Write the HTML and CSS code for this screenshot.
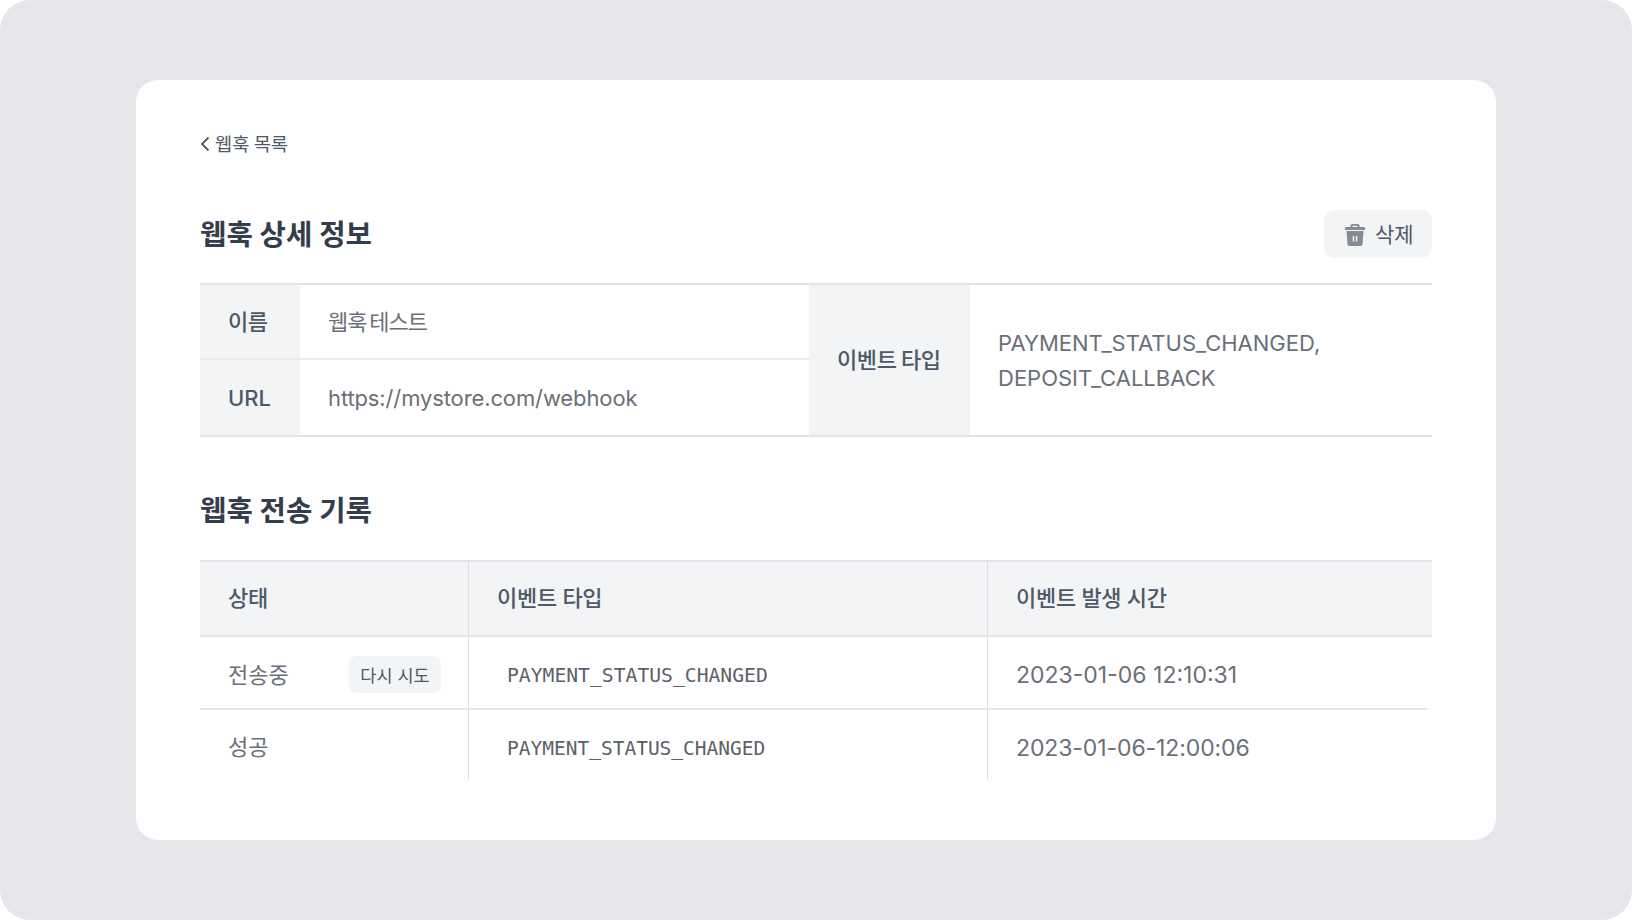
FILE: index.html
```html
<!DOCTYPE html>
<html lang="ko">
    <head>
        <meta charset="utf-8">
        <title>웹훅 상세 정보</title>
        <link rel="stylesheet" href="styles.css">
    </head>

    <body>
        <div class="frame">
            <main class="card">
                <a class="back" href="#">
                    <svg class="chevron" width="10" height="16" viewBox="0 0 10 16"><path d="M8.500 1.500 2 8l6.500 6.500" fill="none" stroke="#4e5968" stroke-width="1.800"/></svg>
                    <span>웹훅 목록</span>
                </a>

                <header class="title-row">
                    <h1>웹훅 상세 정보</h1>
                    <button class="delete">
                        <svg class="trash" width="20" height="24" viewBox="0 0 20 24"><path fill="#858c96" fill-rule="evenodd" d="M7 1h6a1.500 1.500 0 0 1 1.500 1.500V4H19a1 1 0 0 1 1 1v2H0V5a1 1 0 0 1 1-1h4.500V2.500A1.500 1.500 0 0 1 7 1Zm.500 1.800V4h5V2.800ZM1.500 8h17l-1 13.200A2 2 0 0 1 15.500 23h-11a2 2 0 0 1-2-1.800Zm6.200 5v5.500h1.500V13Zm3.100 0v5.500h1.500V13Z"/></svg>
                        <span>삭제</span>
                    </button>
                </header>

                <table class="info">
                    <tr>
                        <th class="col-name hangul">이름</th>
                        <td class="col-value hangul">웹훅 테스트</td>
                        <th class="col-event hangul" rowspan="2">이벤트 타입</th>
                        <td class="events" rowspan="2">PAYMENT_STATUS_CHANGED,<br>DEPOSIT_CALLBACK</td>
                    </tr>
                    <tr>
                        <th>URL</th>
                        <td class="url">https://mystore.com/webhook</td>
                    </tr>
                </table>

                <h2>웹훅 전송 기록</h2>

                <table class="log">
                    <tr>
                        <th class="col-status">상태</th>
                        <th class="col-type">이벤트 타입</th>
                        <th>이벤트 발생 시간</th>
                    </tr>
                    <tr>
                        <td>
                            <div class="status">
                                <span>전송중</span>
                                <button class="retry">다시 시도</button>
                            </div>
                        </td>
                        <td><code>PAYMENT_STATUS_CHANGED</code></td>
                        <td class="time">2023-01-06 12:10:31</td>
                    </tr>
                    <tr>
                        <td>성공</td>
                        <td><code class="small">PAYMENT_STATUS_CHANGED</code></td>
                        <td class="time">2023-01-06-12:00:06</td>
                    </tr>
                </table>
            </main>
        </div>
    </body>
</html>
```

FILE: styles.css
```css
html, body {
    margin: 0;
    background: #fff;
}
body {
    font-family: Inter, "Noto Sans CJK KR", sans-serif;
    color: #4e5968;
}
.frame {
    box-sizing: border-box;
    height: 920px;
    padding: 80px 136px;
    background: #e5e7ea;
    border-radius: 30px;
}
.card {
    box-sizing: border-box;
    height: 760px;
    padding: 49px 64px 0;
    background: #fff;
    border-radius: 22px;
}

.back {
    display: flex;
    align-items: center;
    gap: 5px;
    height: 28px;
    font-size: 18.7px;
    word-spacing: -1px;
    color: #4e5968;
    text-decoration: none;
}
.back span {
    padding-bottom: 2px;
}
.chevron {
    margin-top: 2px;
}

.title-row {
    display: flex;
    justify-content: space-between;
    align-items: center;
    height: 48px;
    margin-top: 53px;
}
h1, h2 {
    margin: 0;
    padding-top: 1px;
    font-size: 28.7px;
    font-weight: 700;
    line-height: 48px;
    color: #333d4b;
}
h2 {
    margin-top: 49px;
}
button {
    border: 0;
    background: #f2f4f6;
    font: inherit;
    color: #4e5968;
}
.delete {
    display: flex;
    align-items: center;
    gap: 10px;
    box-sizing: border-box;
    width: 108px;
    height: 48px;
    padding: 0 0 2px 21px;
    font-size: 21px;
    border-radius: 10px;
}
.trash {
    margin-top: 4px;
}

table {
    width: 1232px;
    border-collapse: separate;
    border-spacing: 0;
    table-layout: fixed;
    font-size: 22px;
}
th {
    background: #f2f4f6;
    font-weight: 500;
    text-align: left;
    color: #4e5968;
}
td {
    color: #6b7078;
}

.info {
    margin-top: 25px;
    border-top: 2px solid #e3e5e8;
    border-bottom: 2px solid #e3e5e8;
}
.info th, .info td {
    height: 75px;
    padding: 0 28px;
    box-sizing: border-box;
}
.info .hangul {
    padding-bottom: 4px;
    letter-spacing: -0.4px;
    word-spacing: -3px;
}
.info .col-value {
    letter-spacing: -1.1px;
    word-spacing: -2px;
}
.info .col-event {
    white-space: nowrap;
    word-spacing: -1px;
}
.info tr:first-child th:first-child, .info tr:first-child .col-value {
    border-bottom: 2px solid #e8eaec;
}
.col-name {
    width: 100px;
}
.col-value {
    width: 509px;
}
.col-event {
    width: 161px;
}
.info .events {
    padding-top: 2px;
    line-height: 35px;
}
.info .url {
    letter-spacing: -0.12px;
}

.log {
    margin-top: 25px;
}
.log th {
    height: 77px;
    box-sizing: border-box;
    border-top: 2px solid #e3e5e8;
    border-bottom: 2px solid #e3e5e8;
    padding-bottom: 6px;
    letter-spacing: -0.3px;
}
.log th, .log td {
    padding-left: 28px;
    padding-right: 28px;
    border-right: 1px solid #dcdee1;
}
.log tr > :last-child {
    border-right: 0;
}
.log td {
    box-sizing: border-box;
    height: 73px;
}
.log tr:last-child td {
    height: 70px;
}
.log tr:nth-child(2) td {
    border-bottom: 2px solid #e3e5e8;
}
.log tr:nth-child(2) td:last-child {
    border-bottom: 0;
    background: linear-gradient(#e3e5e8, #e3e5e8) no-repeat left bottom / calc(100% - 5px) 2px;
}
.col-status {
    width: 269px;
}
.col-type {
    width: 519px;
}
.status {
    display: flex;
    justify-content: space-between;
    align-items: center;
}
.retry {
    width: 92px;
    height: 37px;
    margin: 4px -1px 0 0;
    padding: 0;
    font-size: 17.5px;
    border-radius: 8px;
}
code {
    display: block;
    margin: 5px 0 0 10px;
    font-family: "DejaVu Sans Mono", monospace;
    font-size: 19.7px;
    color: #5c6168;
}
code.small {
    margin-top: 6px;
    font-size: 19.5px;
}
.log .time {
    font-size: 23px;
    padding-top: 3px;
}
.log tr:last-child .time {
    padding-top: 6px;
    letter-spacing: -0.1px;
}
```
